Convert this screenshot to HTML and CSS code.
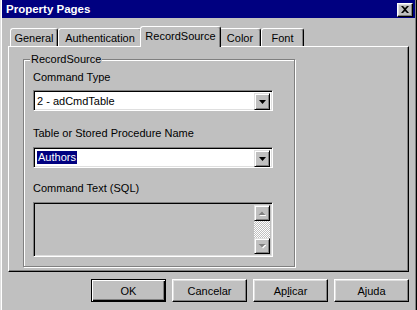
FILE: index.html
```html
<!DOCTYPE html>
<html lang="en">
<head>
    <meta charset="UTF-8">
    <title>Property Pages</title>
    <link rel="stylesheet" href="styles.css">
</head>
<body>
    <div class="window">
        <!-- Title bar -->
        <div class="titlebar">
            <span class="title">Property Pages</span>
            <button class="close">
                <svg width="8" height="7" viewBox="0 0 8 7"><path d="M0 0h2l2 2 2-2h2L5 3.5 8 7H6L4 5 2 7H0l3-3.5z" fill="#000"/></svg>
            </button>
        </div>

        <div class="dialog">
            <!-- Tabs -->
            <div class="tabs">
                <div class="tab tab-general">General</div>
                <div class="tab tab-auth">Authentication</div>
                <div class="tab tab-source active">RecordSource</div>
                <div class="tab tab-color">Color</div>
                <div class="tab tab-font">Font</div>
            </div>

            <!-- Page -->
            <div class="panel">
                <div class="group">
                    <span class="caption">RecordSource</span>

                    <div class="label">Command Type</div>
                    <div class="combo">
                        <span class="value">2 - adCmdTable</span>
                        <span class="drop"><svg width="7" height="4" viewBox="0 0 7 4"><path d="M0 0h7L3.5 4z" fill="#000"/></svg></span>
                    </div>

                    <div class="label label-gap">Table or Stored Procedure Name</div>
                    <div class="combo">
                        <span class="value"><span class="selected">Authors</span></span>
                        <span class="drop"><svg width="7" height="4" viewBox="0 0 7 4"><path d="M0 0h7L3.5 4z" fill="#000"/></svg></span>
                    </div>

                    <div class="label label-gap2">Command Text (SQL)</div>
                    <div class="memo">
                        <div class="memo-text"></div>
                        <div class="scrollbar">
                            <span class="scroll-btn">
                                <svg width="8" height="5" viewBox="0 0 8 5"><path d="M1.5 5h7L5 1.5z" fill="#fff"/><path d="M0.5 4h7L4 0.5z" fill="#808080"/></svg>
                            </span>
                            <span class="scroll-track"></span>
                            <span class="scroll-btn">
                                <svg width="8" height="5" viewBox="0 0 8 5"><path d="M1.5 1h7L5 4.5z" fill="#fff"/><path d="M0.5 0h7L4 3.5z" fill="#808080"/></svg>
                            </span>
                        </div>
                    </div>
                </div>
            </div>

            <!-- Buttons -->
            <div class="buttons">
                <button class="btn default">OK</button>
                <button class="btn">Cancelar</button>
                <button class="btn">Ap<u>l</u>icar</button>
                <button class="btn">Ajuda</button>
            </div>
        </div>
    </div>
</body>
</html>
```

FILE: styles.css
```css
/* General Styles */
body {
    margin: 0;
    background: #c0c0c0;
    font-family: 'Liberation Sans', Arial, sans-serif;
    font-size: 11px;
    color: #000;
}

.window {
    width: 417px;
    height: 310px;
    box-sizing: border-box;
    padding-left: 1px;
    border-left: 1px solid #dfdfdf;
    border-right: 1px solid #000;
    box-shadow: inset 1px 0 #fff, inset -1px 0 #808080;
    padding-right: 1px;
    overflow: hidden;
}

.titlebar {
    height: 18px;
    background: #000080;
    color: #fff;
    display: flex;
    align-items: center;
    justify-content: space-between;
    padding: 0 2px 0 4px;
}

.title {
    font-weight: bold;
    font-size: 11.5px;
}

.close {
    width: 16px;
    height: 14px;
    margin-top: 1px;
    padding: 0;
    background: #c0c0c0;
    border: 1px solid;
    border-color: #fff #000 #000 #fff;
    box-shadow: inset -1px -1px #808080, inset 1px 1px #dfdfdf;
    display: flex;
    align-items: center;
    justify-content: center;
}

.dialog {
    padding: 8px 6px 0 6px;
}

/* Tabs */
.tabs {
    height: 20px;
    margin-left: 2px;
    display: flex;
    align-items: flex-end;
    position: relative;
    z-index: 1;
}

.tab {
    height: 18px;
    box-sizing: border-box;
    border: 1px solid;
    border-color: #fff #000 transparent #fff;
    border-bottom: none;
    border-radius: 3px 3px 0 0;
    box-shadow: inset -1px 0 #808080;
    background: #c0c0c0;
    display: flex;
    align-items: center;
    justify-content: center;
    padding-top: 1px;
}

.tab-general { width: 48px; }
.tab-auth { width: 84px; }
.tab-source { width: 77px; }
.tab-color { width: 42px; }
.tab-font { width: 43px; }

.tab.active {
    width: 81px;
    height: 21px;
    margin: 0 -2px -1px -2px;
    position: relative;
    z-index: 2;
    padding-top: 0;
    padding-bottom: 3px;
}

/* Page */
.panel {
    height: 226px;
    box-sizing: border-box;
    border: 1px solid;
    border-color: #fff #000 #000 #fff;
    box-shadow: inset -1px -1px #808080;
    padding: 12px 0 0 14px;
}

.group {
    position: relative;
    width: 272px;
    height: 208px;
    box-sizing: border-box;
    border: 1px solid #808080;
    box-shadow: 1px 1px #fff, inset 1px 1px #fff;
    padding: 11px 0 0 9px;
}

.caption {
    position: absolute;
    top: -7px;
    left: 6px;
    padding: 0 1px;
    line-height: 13px;
    background: #c0c0c0;
}

.label {
    line-height: 13px;
    height: 13px;
    margin-bottom: 6px;
}

.label-gap {
    margin-top: 16px;
    margin-bottom: 7px;
}

.label-gap2 {
    margin-top: 14px;
    margin-bottom: 7px;
}

.combo,
.memo {
    width: 240px;
    box-sizing: border-box;
    border: 1px solid;
    border-color: #808080 #fff #fff #808080;
    box-shadow: inset 1px 1px #000, inset -1px -1px #dfdfdf;
    padding: 2px;
    display: flex;
}

.combo {
    height: 21px;
    background: #fff;
}

.value {
    flex: 1;
    display: flex;
    align-items: center;
    padding-left: 1px;
}

.selected {
    background: #000080;
    color: #fff;
    line-height: 13px;
    padding: 0 1px;
}

.drop,
.scroll-btn {
    width: 16px;
    box-sizing: border-box;
    background: #c0c0c0;
    border: 1px solid;
    border-color: #dfdfdf #000 #000 #dfdfdf;
    box-shadow: inset 1px 1px #fff, inset -1px -1px #808080;
    display: flex;
    align-items: center;
    justify-content: center;
}

.drop {
    height: 17px;
}

.memo {
    height: 55px;
    background: #c0c0c0;
}

.memo-text {
    flex: 1;
}

.scrollbar {
    width: 16px;
    display: flex;
    flex-direction: column;
}

.scroll-btn {
    height: 16px;
}

.scroll-track {
    flex: 1;
    background: repeating-conic-gradient(#fff 0 25%, #c0c0c0 0 50%) 0 0 / 2px 2px;
}

/* Buttons */
.buttons {
    display: flex;
    justify-content: flex-end;
    gap: 6px;
    margin-top: 7px;
}

.btn {
    width: 75px;
    height: 23px;
    padding: 0;
    font-family: inherit;
    font-size: 11px;
    color: #000;
    background: #c0c0c0;
    border: 1px solid;
    border-color: #fff #000 #000 #fff;
    box-shadow: inset -1px -1px #808080, inset 1px 1px #dfdfdf;
}

.btn.default {
    border: 1px solid #000;
    box-shadow: inset 1px 1px #fff, inset -1px -1px #000, inset -2px -2px #808080;
}
```
